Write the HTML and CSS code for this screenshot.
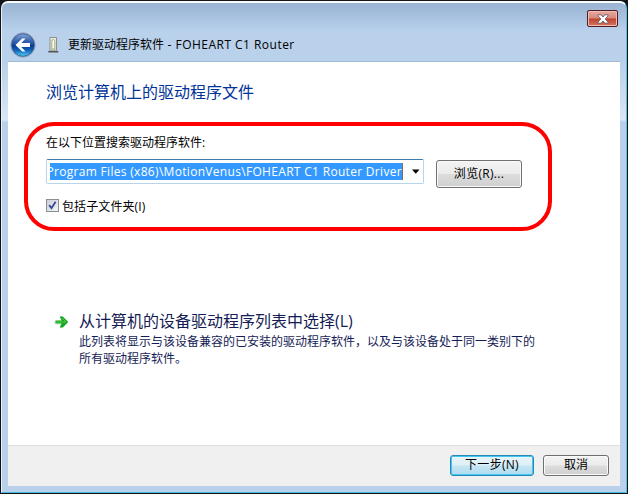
FILE: index.html
```html
<!DOCTYPE html>
<html lang="zh-CN">
<head>
<meta charset="utf-8">
<title>更新驱动程序软件</title>
<link rel="stylesheet" href="styles.css">
</head>
<body>
<div class="window">
  <header class="titlebar">
    <button class="close" aria-label="关闭">
      <svg width="12" height="10" viewBox="0 0 12 10"><path d="M1 .8h3.100L6 3 7.900 .8H11v1.100L8.200 5 11 8.100v1.100H7.900L6 7 4.100 9.200H1V8.100L3.800 5 1 1.900z" fill="#fff" stroke="#59505e" stroke-width=".8"/></svg>
    </button>
    <div class="caption">
      <svg class="back" width="26" height="26" viewBox="0 0 26 26">
        <defs>
          <linearGradient id="orb" x1="0" y1="0" x2="0" y2="1"><stop offset="0" stop-color="#8aa6d4"/><stop offset=".3" stop-color="#3e68b2"/><stop offset=".48" stop-color="#1f4c9e"/><stop offset=".52" stop-color="#06398d"/><stop offset=".75" stop-color="#1568bf"/><stop offset="1" stop-color="#55d4fa"/></linearGradient>
        </defs>
        <circle cx="13" cy="13" r="12.200" fill="#d4e2f2" stroke="#7d93b5" stroke-width=".8"/>
        <circle cx="13" cy="13" r="11.300" fill="url(#orb)" stroke="#26457f" stroke-width=".8"/>
        <path d="M5.500 13l6.700-6.500h3.300L11.300 11H20v4h-8.700l4.200 4.500h-3.300z" fill="#fff"/>
      </svg>
      <svg class="device" width="11" height="16" viewBox="0 0 11 16">
        <path d="M2 .5h6.500V14H2z" fill="#e9ebe4" stroke="#8b908b"/>
        <path d="M3.800 12V4.500q0-2 1.500-2t1.500 2V12z" fill="#fbfde9" stroke="#9aa16e" stroke-width=".9"/>
        <path d="M.3 14h10v1.500H.3z" fill="#555"/>
        <path d="M2.500 13.200h5.800" stroke="#a4a5a0"/>
      </svg>
      <span class="caption-text">更新驱动程序软件<span class="caption-latin"> - FOHEART C1 Router</span></span>
    </div>
  </header>
  <main class="page">
    <h1>浏览计算机上的驱动程序文件</h1>
    <section class="search">
      <div class="label">在以下位置搜索驱动程序软件:</div>
      <div class="row">
        <div class="combo">
          <div class="selection"><span>Program Files (x86)\MotionVenus\FOHEART C1 Router Driver</span></div>
          <svg class="arrow" width="8" height="5" viewBox="0 0 8 5"><path d="M0 .5h7.500L4 4.500h-.5z" fill="#000"/></svg>
        </div>
        <button class="button browse">浏览(R)...</button>
      </div>
      <label class="check">
        <span class="box"><svg width="9" height="9" viewBox="0 0 9 9"><path d="M1.200 4.200l2.300 3L7.600 .8" fill="none" stroke="#3c4a95" stroke-width="1.900"/></svg></span>
        <span class="check-text">包括子文件夹(I)</span>
      </label>
    </section>
    <section class="choice">
      <svg class="go" width="17" height="16" viewBox="0 0 17 16">
        <path d="M3 8.500h10M8.500 4l4.500 4-4.500 4.500" fill="none" stroke="#e3ece5" stroke-width="4" stroke-linecap="round" stroke-linejoin="round"/>
        <path d="M2.500 6.500h6.200L6.700 2.500h3L15.200 8l-5.500 5.500h-3l2-4H2.500z" fill="#15a51e"/>
        <path d="M9 4l4 4H3" fill="none" stroke="#54cf46"/>
      </svg>
      <div>
        <h2>从计算机的设备驱动程序列表中选择(L)</h2>
        <p>此列表将显示与该设备兼容的已安装的驱动程序软件，以及与该设备处于同一类别下的<br>所有驱动程序软件。</p>
      </div>
    </section>
  </main>
  <footer class="actions">
    <button class="button next">下一步(N)</button>
    <button class="button">取消</button>
  </footer>
</div>
</body>
</html>
```
FILE: styles.css
```css
* { box-sizing: border-box; }

body {
  margin: 0;
  background: #101418;
  font: 12px/16px "Open Sans", "Noto Sans CJK SC", sans-serif;
  color: #000;
}

.window {
  width: 626px;
  height: 492px;
  margin: 1px 0 0 1px;
  padding: 0 6px 6px;
  display: flex;
  flex-direction: column;
  border-top: 2px solid #fafcfe;
  border-left: 1px solid #eaf3fb;
  border-right: 1px solid #55c3df;
  border-bottom: 1px solid #43bdd9;
  border-radius: 7px 7px 0 0;
  background: linear-gradient(#9ab4d3 0, #a5bfdd 12px, #b9d1eb 28px, #b9d1ea 60px, #d9e6f6 117px, #b9d1ea 119px);
}

.titlebar {
  flex: 0 0 59px;
  display: flex;
  flex-direction: column;
  align-items: flex-end;
  padding: 7px 2px 0 0;
  border-bottom: 1px solid #9fbad4;
}

.close {
  width: 31px;
  height: 17px;
  padding: 0;
  display: flex;
  align-items: center;
  justify-content: center;
  border: 1px solid #501c28;
  border-radius: 2px;
  background: linear-gradient(#e7aaa0, #d8897b 48%, #bd4431 52%, #d4745f);
  box-shadow: inset 0 0 0 1px #efbdb4;
}

.caption {
  align-self: stretch;
  display: flex;
  align-items: center;
  height: 26px;
  margin: 5px 0 0 2px;
}

.device { margin-left: 12px; }
.caption-text { margin: 0 0 0 9px; white-space: pre; }
.caption-latin { letter-spacing: .47px; }

.page {
  flex: 1;
  background: #fff;
  padding: 18px 68px 0 16px;
}

h1 {
  margin: 0 0 0 22px;
  font-size: 16px;
  line-height: 24px;
  font-weight: 400;
  color: #003399;
}

.search {
  height: 109px;
  margin-top: 18px;
  padding: 9px 0 0 18px;
  border: 4px solid #f00;
  border-radius: 30px;
}

.row { display: flex; gap: 12px; margin-top: 8px; }

.combo {
  width: 378px;
  height: 25px;
  padding: 2px 3px;
  display: flex;
  align-items: center;
  justify-content: space-between;
  border: 1px solid #b7d5e8;
  border-top-color: #3d7bad;
  border-radius: 2px;
}

.selection {
  width: 353px;
  height: 17px;
  overflow: hidden;
  display: flex;
  justify-content: flex-end;
  border-right: 1px solid #7c6d62;
  background: #3399ff;
  color: #fff;
  white-space: nowrap;
  line-height: 17px;
  letter-spacing: .31px;
}

.button {
  width: 66px;
  height: 21px;
  padding: 0;
  border: 1px solid #707070;
  border-radius: 3px;
  background: linear-gradient(#f3f3f3, #ebebeb 49%, #dddddd 51%, #cfcfcf);
  box-shadow: inset 0 0 0 1px #fafafa;
  font: inherit;
  line-height: 17px;
}

.browse { width: 86px; height: 28px; margin-top: 1px; padding-bottom: 1px; letter-spacing: .3px; }

.check { display: flex; align-items: center; gap: 3px; margin-top: 9px; }
.check-text { padding-top: 2px; margin-bottom: -2px; letter-spacing: .1px; }
.box {
  width: 13px;
  height: 13px;
  padding: 1px;
  border: 1px solid #8b8d90;
  background: linear-gradient(135deg, #c9d0d8, #f5f6f7);
}
.box svg { display: block; }

.choice { display: flex; gap: 9px; margin: 78px -30px 0 29px; }
.go { flex: none; margin-top: 5px; }

h2 {
  margin: 0;
  font-size: 16px;
  line-height: 24px;
  font-weight: 400;
  color: #151c55;
}

p { margin: 0; line-height: 17px; color: #151c55; white-space: nowrap; }

.actions {
  flex: 0 0 41px;
  display: flex;
  justify-content: flex-end;
  align-items: center;
  gap: 9px;
  padding: 0 11px 1px 0;
  border-top: 1px solid #dfdfdf;
  background: #f0f0f0;
}

.actions .button { line-height: 16px; padding-bottom: 2px; }

.actions .next {
  width: 84px;
  letter-spacing: .3px;
  border-color: #2b87b5;
  background: linear-gradient(#eaf5fa, #dceff8 49%, #c5e5f4 51%, #b0dcf0);
  box-shadow: inset 0 0 0 1px #3fc8f2;
}
```
